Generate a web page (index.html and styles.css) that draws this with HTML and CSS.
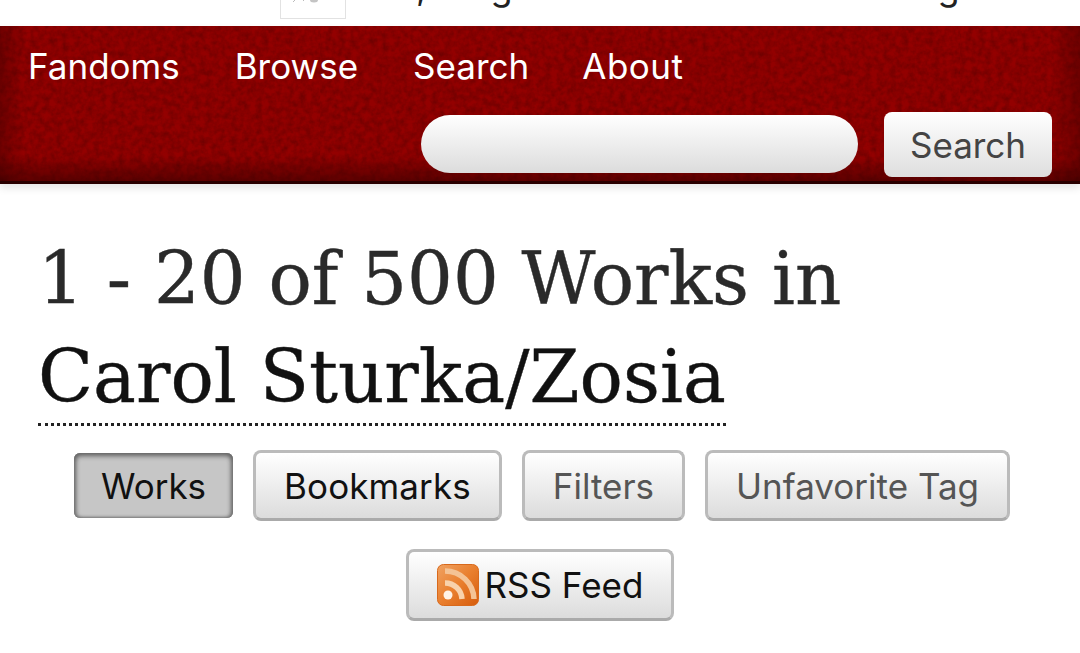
FILE: index.html
```html
<!DOCTYPE html>
<html>
<head>
  <title>Carol Sturka/Zosia - Works</title>
  <link rel="stylesheet" href="styles.css">
</head>
<body>
  <div class="top-strip">
    <div class="logo-box">
      <svg class="logo-scrap" viewBox="0 0 66 4" width="66" height="4">
        <path d="M14 0l-2 2M22 0l1 1" stroke="#bbb" stroke-width="1" fill="none"/>
        <ellipse cx="33" cy="0" rx="4" ry="2.5" fill="#c4c4c4"/>
      </svg>
    </div>
    <span class="site-name">,</span>
    <span class="site-name second">g</span>
    <span class="site-end">g</span>
  </div>

  <header class="site-header">
    <nav class="main-nav">
      <a href="#">Fandoms</a>
      <a href="#">Browse</a>
      <a href="#">Search</a>
      <a href="#">About</a>
    </nav>
    <form class="search-form">
      <input class="search-input" type="text">
      <button class="search-button" type="button">Search</button>
    </form>
  </header>

  <main class="content">
    <h2 class="heading">1 - 20 of 500 Works in <a href="#">Carol Sturka/Zosia</a></h2>
    <ul class="actions">
      <li><a class="btn current" href="#">Works</a></li>
      <li><a class="btn wide" href="#">Bookmarks</a></li>
      <li><a class="btn muted" href="#">Filters</a></li>
      <li><a class="btn muted" href="#">Unfavorite Tag</a></li>
      <li class="rss-item">
        <a class="btn rss" href="#">
          <svg class="rss-icon" viewBox="0 0 42 42" width="42" height="42">
            <defs>
              <linearGradient id="rss-bg" x1="0" y1="0" x2="1" y2="1">
                <stop offset="0" stop-color="#f0a262"/>
                <stop offset="0.5" stop-color="#e97f2e"/>
                <stop offset="1" stop-color="#d65c0c"/>
              </linearGradient>
            </defs>
            <rect x="0.5" y="0.5" width="41" height="41" rx="6" fill="url(#rss-bg)" stroke="#d8691c"/>
            <circle cx="11" cy="31" r="4.5" fill="#fff3e6"/>
            <path d="M8 19a17 17 0 0 1 17 16" fill="none" stroke="#f8d2ac" stroke-width="5.5"/>
            <path d="M8 7a29 29 0 0 1 29 28" fill="none" stroke="#f4c395" stroke-width="5.5"/>
          </svg>RSS Feed</a>
      </li>
    </ul>
  </main>
</body>
</html>
```

FILE: styles.css
```css
:root {
  --text: #2a2a2a;
  --btn-border: #bbb;
  --sans: "Inter", "Lato", sans-serif;
  --serif: "DejaVu Serif", "Liberation Serif", serif;
  --grain: url("data:image/svg+xml,%3Csvg xmlns='http://www.w3.org/2000/svg' width='320' height='160'%3E%3Cfilter id='n'%3E%3CfeTurbulence type='fractalNoise' baseFrequency='0.16' numOctaves='3'/%3E%3CfeColorMatrix values='0 0 0 0 0 0 0 0 0 0 0 0 0 0 0 0 0 0 0.4 -0.12'/%3E%3C/filter%3E%3Crect width='320' height='160' filter='url(%23n)'/%3E%3C/svg%3E");
}
html, body {
  height: 653px;
  overflow: hidden;
}
body {
  margin: 0;
  background: #fff;
  color: var(--text);
  font-family: var(--sans);
}
a {
  color: inherit;
  text-decoration: none;
}

.top-strip {
  height: 26px;
  display: flex;
  overflow: hidden;
  padding-left: 280px;
  font-size: 36px;
  line-height: 1;
  color: #222;
}
.logo-box {
  width: 66px;
  height: 19px;
  box-sizing: border-box;
  border: 1px solid #e2e2e2;
  border-top: 0;
}
.logo-scrap {
  display: block;
}
.site-name {
  margin: -31px 0 0 70px;
}
.site-name.second {
  margin-left: 64px;
}
.site-end {
  margin: -31px 0 0 425px;
}

.site-header {
  height: 158px;
  padding: 0 28px;
  display: flex;
  flex-direction: column;
  justify-content: space-between;
  box-sizing: border-box;
  background-color: #930000;
  background-image: linear-gradient(transparent 130px, rgba(50, 0, 0, 0.55) 155px), linear-gradient(90deg, rgba(60, 0, 0, 0.4), transparent 24px, transparent 1050px, rgba(60, 0, 0, 0.4)), var(--grain);
  border-bottom: 3px solid #2a0000;
  box-shadow: 0 4px 8px rgba(0, 0, 0, 0.1);
}
.main-nav {
  display: flex;
  gap: 55px;
  padding-top: 18px;
  font-size: 35px;
  line-height: 44px;
  color: #fff;
}
.main-nav a:last-child {
  margin-left: -2px;
  letter-spacing: 0.5px;
}
.search-form {
  display: flex;
  justify-content: flex-end;
  align-items: center;
  gap: 26px;
  padding-bottom: 4px;
}
.search-input {
  width: 437px;
  height: 58px;
  margin-bottom: 2px;
  box-sizing: border-box;
  border: 0;
  border-radius: 29px;
  background: linear-gradient(#fff, #dcdcdc);
}
.search-button {
  width: 168px;
  height: 65px;
  border: 0;
  border-radius: 8px;
  background: linear-gradient(#fff, #dedede);
  color: #444;
  font-family: var(--sans);
  font-size: 35px;
}

.content {
  padding: 46px 38px 0;
}
.heading {
  margin: 0 0 24px;
  font-family: var(--serif);
  font-weight: normal;
  font-size: 72px;
  line-height: 98px;
  -webkit-text-stroke: 0.4px currentColor;
}
.heading a {
  color: #111;
  padding-bottom: 4px;
  border-bottom: 3px dotted #222;
}
.actions {
  list-style: none;
  margin: 0 -38px;
  padding: 0 0 0 4px;
  display: flex;
  flex-wrap: wrap;
  justify-content: center;
  gap: 28px 20px;
}
.rss-item {
  margin-left: -4px;
}
.btn {
  display: flex;
  align-items: center;
  box-sizing: border-box;
  height: 71px;
  padding: 0 28px;
  border: 3px solid var(--btn-border);
  border-bottom-color: #aaa;
  border-radius: 8px;
  background: linear-gradient(#fff, #dcdcdc);
  color: #111;
  font-size: 35px;
}
.btn.muted {
  color: #555;
}
.btn.wide {
  letter-spacing: 0.1px;
}
.btn.current {
  height: 65px;
  margin-top: 3px;
  padding: 0 27px;
  border: 0;
  border-radius: 6px;
  background: #c6c6c6;
  box-shadow: inset 0 3px 5px #666, inset 3px 0 4px -1px #777, inset -3px 0 4px -1px #777, inset 0 -1px 2px #999;
}
.btn.rss {
  height: 72px;
}
.rss-icon {
  margin-right: 6px;
}
```
